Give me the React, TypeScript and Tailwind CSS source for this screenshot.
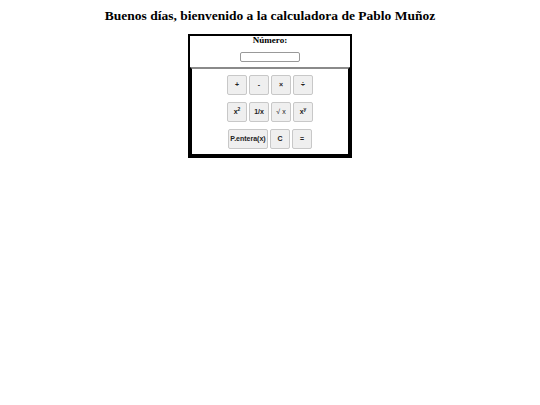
const rows: string[][] = [
  ["+", "-", "×", "÷"],
  ["x²", "1/x", "√x", "xʸ"],
  ["P.entera(x)", "C", "="],
];

function CalcButton({ label }: { label: string }) {
  const wide = label.length > 4;
  return (
    <button
      type="button"
      className={`flex h-[20px] items-center justify-center rounded-[2px] border border-[#c8c8c8] bg-[#efefef] font-['Liberation_Sans',Arial,sans-serif] text-[7px] font-bold text-[#222] ${
        wide ? "w-[40px] px-0" : "w-[20px]"
      }`}
    >
      {label === "x²" ? (
        <span>
          x<sup className="text-[5px]">2</sup>
        </span>
      ) : label === "xʸ" ? (
        <span>
          x<sup className="text-[5px]">y</sup>
        </span>
      ) : label === "√x" ? (
        <span className="font-normal">√ x</span>
      ) : (
        label
      )}
    </button>
  );
}

export default function App() {
  return (
    <div className="min-h-[405px] w-[540px] bg-white font-['Liberation_Serif',serif] text-black">
      <h1 className="pt-[8px] text-center text-[13.5px] font-bold leading-[16px]">
        Buenos días, bienvenido a la calculadora de Pablo Muñoz
      </h1>

      <div className="mx-auto mt-[10px] w-[164px] border-2 border-black">
        <div className="flex flex-col items-center pb-[5px]">
          <label className="text-[9px] font-bold leading-[9px]">Número:</label>
          <input
            type="text"
            className="mt-[7px] h-[10px] w-[60px] rounded-[2px] border border-[#999] bg-white"
          />
        </div>

        <div className="flex flex-col items-center gap-[7px] border-x-2 border-t-2 border-b-2 border-x-black border-t-[#8a8a8a] border-b-black pt-[6px] pb-[5px]">
          {rows.map((row, i) => (
            <div key={i} className="flex gap-[2px]">
              {row.map((b) => (
                <CalcButton key={b} label={b} />
              ))}
            </div>
          ))}
        </div>
      </div>
    </div>
  );
}
